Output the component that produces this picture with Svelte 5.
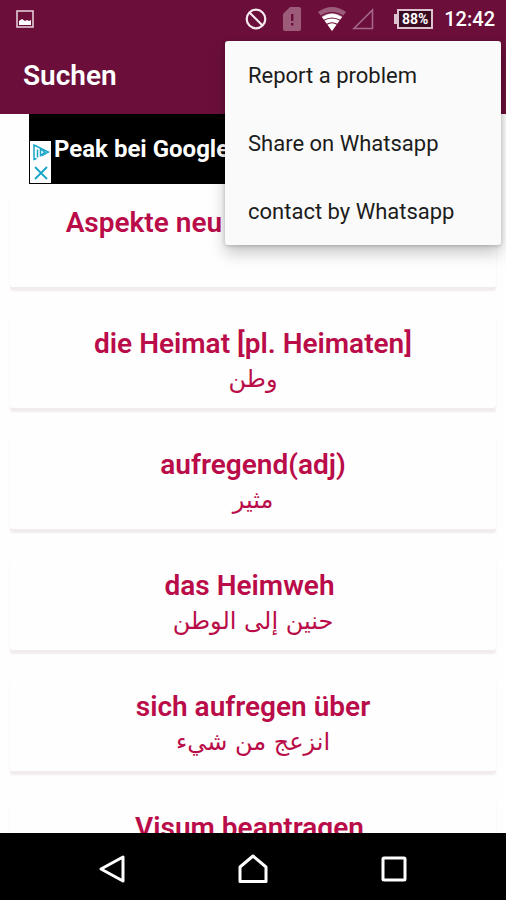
<script lang="ts">
	type Entry = {
		word: string;
		translation: string;
	};

	const entries: Entry[] = [
		{ word: 'Aspekte neu B1 plus Kapitel 1', translation: '' },
		{ word: 'die Heimat [pl. Heimaten]', translation: 'وطن' },
		{ word: 'aufregend(adj)', translation: 'مثير' },
		{ word: 'das Heimweh ', translation: 'حنين إلى الوطن' },
		{ word: 'sich aufregen über', translation: 'انزعج من شيء' },
		{ word: 'Visum beantragen ', translation: '' }
	];

	const menuItems = ['Report a problem', 'Share on Whatsapp', 'contact by Whatsapp'];

	let menuOpen = $state(true);
	let adVisible = $state(true);
</script>

<svelte:head>
	<title>Suchen</title>
</svelte:head>

<div class="screen">
	<div class="status-bar">
		<svg class="picture" width="18" height="18" viewBox="0 0 18 18">
			<rect x="1" y="1" width="16" height="16" fill="none" stroke="#e3c9d5" stroke-width="1.600" />
			<path d="M3 15v-4l3-2 3 2 2-1 2 1 2-1v5z" fill="#fff" />
		</svg>
		<svg width="22" height="22" viewBox="0 0 22 22" fill="none" stroke="#f6eaf0" stroke-width="2.200">
			<circle cx="11" cy="11" r="9.3" />
			<path d="M4.5 4.5l13 13" />
		</svg>
		<svg class="sim" width="18" height="24" viewBox="0 0 18 24">
			<path d="M7 0h9q2 0 2 2v20q0 2-2 2H2q-2 0-2-2V7z" fill="#9c5b79" />
			<path d="M8 7h2.4v7H8zM8 16h2.4v2.4H8z" fill="#6b0f3a" />
		</svg>
		<svg class="wifi" width="28" height="24" viewBox="0 0 28 24">
			<path d="M0 5Q14-5 28 5L14 24z" fill="#9c5b79" />
			<path d="M4 10Q14 3 24 10L14 24z" fill="#fff" />
			<path d="M2 9.5q12-8 24 0M5.500 13.500q8.500-5 17 0M8.500 17.500q5.500-3.500 11 0" fill="none" stroke="#6b0f3a" stroke-width="1.100" />
		</svg>
		<svg class="signal" width="22" height="22" viewBox="0 0 22 22">
			<path d="M20.500 2v18.500H2z" fill="none" stroke="#a4678a" stroke-width="1.600" />
		</svg>
		<div class="battery">88%</div>
		<time>12:42</time>
	</div>

	<header>
		<h1>Suchen</h1>
	</header>

	<main>
		{#if adVisible}
			<div class="ad">
				<div class="ad-controls">
					<button aria-label="Ad choices">
						<svg width="18" height="18" viewBox="0 0 18 18" fill="none" stroke="#18a5c9" stroke-width="1.500">
							<path d="M4.500 15.500L2 16.500V2l14.500 7-7 3.800" />
							<path d="M5.500 6.500v8M8.500 6v6.500l4.500-3.300z" />
						</svg>
					</button>
					<button aria-label="Close ad" onclick={() => (adVisible = false)}>
						<svg width="18" height="18" viewBox="0 0 18 18" fill="none" stroke="#18a5c9" stroke-width="1.800">
							<path d="M3 3l12 12M15 3L3 15" />
						</svg>
					</button>
				</div>
				<a href="#ad">Peak bei Google</a>
			</div>
		{/if}

		<div class="list">
			{#each entries as entry}
				<article class="card">
					<h2>{entry.word}</h2>
					<p lang="ar" dir="rtl">{entry.translation}</p>
				</article>
			{/each}
		</div>
	</main>

	<nav>
		<button aria-label="Back">
			<svg width="30" height="30" viewBox="0 0 30 30">
				<path d="M26 3v24L4 15z" />
			</svg>
		</button>
		<button aria-label="Home">
			<svg width="30" height="30" viewBox="0 0 30 30">
				<path d="M2 13L15 2l13 11v14.500H2z" />
			</svg>
		</button>
		<button aria-label="Recent apps">
			<svg width="30" height="30" viewBox="0 0 30 30">
				<rect x="4" y="4" width="22" height="22" rx="1" />
			</svg>
		</button>
	</nav>

	{#if menuOpen}
		<div class="menu" role="menu">
			{#each menuItems as item}
				<button role="menuitem" onclick={() => (menuOpen = false)}>{item}</button>
			{/each}
		</div>
	{/if}
</div>

<style>
	:global(body) {
		margin: 0;
		background: #fefefe;
	}

	.screen {
		position: relative;
		display: flex;
		flex-direction: column;
		height: 100vh;
		overflow: hidden;
		font-family: Roboto, 'Liberation Sans', sans-serif;
	}

	button {
		margin: 0;
		padding: 0;
		border: 0;
		background: none;
		font-family: inherit;
		cursor: pointer;
	}

	svg {
		display: block;
		flex: none;
	}

	.status-bar {
		display: flex;
		align-items: center;
		height: 37px;
		padding: 0 11px 0 16px;
		background: #6b0f3a;
		color: #fff;
	}

	.picture {
		margin-right: auto;
	}

	.sim {
		margin-left: 16px;
	}

	.wifi {
		margin-left: 17px;
	}

	.signal {
		margin-left: 6px;
	}

	.battery {
		position: relative;
		box-sizing: border-box;
		width: 36px;
		height: 20px;
		margin-left: 23px;
		border: 2px solid #dcc3cf;
		background: #3a0a20;
		font-size: 14px;
		font-weight: 700;
		line-height: 16px;
		text-align: center;
	}

	.battery::before {
		content: '';
		position: absolute;
		top: 3px;
		left: -5px;
		width: 3px;
		height: 10px;
		background: #dcc3cf;
	}

	time {
		margin-left: 11px;
		font-size: 20px;
		font-weight: 500;
	}

	header {
		display: flex;
		align-items: center;
		flex: none;
		height: 77px;
		padding: 0 23px;
		background: #6b0f3a;
	}

	h1 {
		margin: 0;
		color: #fff;
		font-size: 28px;
		font-weight: 600;
	}

	main {
		flex: 1;
		min-height: 0;
		overflow: hidden;
	}

	.ad {
		display: flex;
		align-items: center;
		box-sizing: border-box;
		height: 70px;
		margin: 0 29px;
		background: #000;
	}

	.ad-controls {
		display: flex;
		flex-direction: column;
		align-self: flex-end;
		justify-content: space-around;
		align-items: center;
		width: 21px;
		height: 42px;
		margin: 0 3px 1px 1px;
		background: #fff;
	}

	.ad a {
		color: #fff;
		font-size: 24px;
		font-weight: 700;
		text-decoration: none;
		white-space: nowrap;
	}

	.list {
		display: flex;
		flex-direction: column;
		gap: 28px;
		padding: 10px;
	}

	.card {
		box-sizing: border-box;
		min-height: 93px;
		padding: 12px 8px 10px;
		border-radius: 3px;
		background: #fefefe;
		box-shadow: 0 4px 2px #f1ebed;
		color: #b90c48;
		text-align: center;
	}

	h2 {
		margin: 0;
		font-size: 28px;
		font-weight: 600;
		line-height: 34px;
		white-space: pre;
	}

	p {
		margin: 0;
		font-family: 'DejaVu Sans', sans-serif;
		font-size: 24px;
		line-height: 36px;
	}

	nav {
		display: flex;
		align-items: center;
		justify-content: center;
		gap: 111px;
		box-sizing: border-box;
		flex: none;
		height: 67px;
		padding-top: 4px;
		background: #000;
	}

	nav svg {
		fill: none;
		stroke: #fff;
		stroke-width: 3;
		stroke-linejoin: round;
	}

	.menu {
		position: absolute;
		top: 41px;
		right: 5px;
		display: flex;
		flex-direction: column;
		width: 276px;
		border-radius: 3px;
		background: #fafafa;
		box-shadow: 0 8px 16px rgba(0, 0, 0, 0.22), 0 1px 4px rgba(0, 0, 0, 0.2);
	}

	.menu button {
		height: 68px;
		padding: 0 23px;
		color: #1c1c1c;
		font-size: 22px;
		text-align: left;
	}
</style>
